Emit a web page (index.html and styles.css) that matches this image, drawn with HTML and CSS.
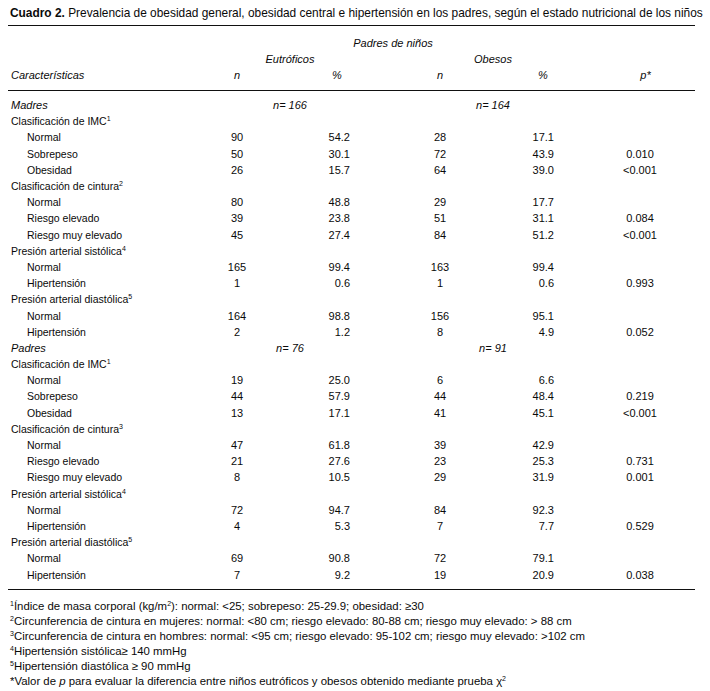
FILE: index.html
```html
<!DOCTYPE html>
<html lang="es">
<head>
<meta charset="utf-8">
<link rel="stylesheet" href="styles.css">
</head>
<body>
<div class="page">
  <p class="caption"><b>Cuadro 2.</b> Prevalencia de obesidad general, obesidad central e hipertensión en los padres, según el estado nutricional de los niños</p>
  <table class="tbl">
    <colgroup>
      <col class="c-label"><col class="c-n1"><col class="c-p1"><col class="c-n2"><col class="c-p2"><col class="c-p">
    </colgroup>
    <thead>
      <tr class="h1"><th></th><th colspan="4" class="ctr">Padres de niños</th><th></th></tr>
      <tr class="h2"><th></th><th colspan="2" class="ctr">Eutróficos</th><th colspan="2" class="ctr">Obesos</th><th></th></tr>
      <tr class="h3"><th class="lbl">Características</th><th class="ctr">n</th><th class="ctr">%</th><th class="ctr">n</th><th class="ctr">%</th><th class="ctr">p*</th></tr>
    </thead>
    <tbody>
      <tr class="first"><td class="grp">Madres</td><td colspan="2" class="ctr it">n= 166</td><td colspan="2" class="ctr it">n= 164</td><td></td></tr>
      <tr><td class="cat">Clasificación de IMC<sup>1</sup></td><td></td><td></td><td></td><td></td><td></td></tr>
      <tr><td class="sub">Normal</td><td class="n">90</td><td class="pc">54.2</td><td class="n">28</td><td class="pc2">17.1</td><td class="pv"></td></tr>
      <tr><td class="sub">Sobrepeso</td><td class="n">50</td><td class="pc">30.1</td><td class="n">72</td><td class="pc2">43.9</td><td class="pv">0.010</td></tr>
      <tr><td class="sub">Obesidad</td><td class="n">26</td><td class="pc">15.7</td><td class="n">64</td><td class="pc2">39.0</td><td class="pv">&lt;0.001</td></tr>
      <tr><td class="cat">Clasificación de cintura<sup>2</sup></td><td></td><td></td><td></td><td></td><td></td></tr>
      <tr><td class="sub">Normal</td><td class="n">80</td><td class="pc">48.8</td><td class="n">29</td><td class="pc2">17.7</td><td class="pv"></td></tr>
      <tr><td class="sub">Riesgo elevado</td><td class="n">39</td><td class="pc">23.8</td><td class="n">51</td><td class="pc2">31.1</td><td class="pv">0.084</td></tr>
      <tr><td class="sub">Riesgo muy elevado</td><td class="n">45</td><td class="pc">27.4</td><td class="n">84</td><td class="pc2">51.2</td><td class="pv">&lt;0.001</td></tr>
      <tr><td class="cat">Presión arterial sistólica<sup>4</sup></td><td></td><td></td><td></td><td></td><td></td></tr>
      <tr><td class="sub">Normal</td><td class="n">165</td><td class="pc">99.4</td><td class="n">163</td><td class="pc2">99.4</td><td class="pv"></td></tr>
      <tr><td class="sub">Hipertensión</td><td class="n">1</td><td class="pc">0.6</td><td class="n">1</td><td class="pc2">0.6</td><td class="pv">0.993</td></tr>
      <tr><td class="cat">Presión arterial diastólica<sup>5</sup></td><td></td><td></td><td></td><td></td><td></td></tr>
      <tr><td class="sub">Normal</td><td class="n">164</td><td class="pc">98.8</td><td class="n">156</td><td class="pc2">95.1</td><td class="pv"></td></tr>
      <tr><td class="sub">Hipertensión</td><td class="n">2</td><td class="pc">1.2</td><td class="n">8</td><td class="pc2">4.9</td><td class="pv">0.052</td></tr>
      <tr><td class="grp">Padres</td><td colspan="2" class="ctr it">n= 76</td><td colspan="2" class="ctr it">n= 91</td><td></td></tr>
      <tr><td class="cat">Clasificación de IMC<sup>1</sup></td><td></td><td></td><td></td><td></td><td></td></tr>
      <tr><td class="sub">Normal</td><td class="n">19</td><td class="pc">25.0</td><td class="n">6</td><td class="pc2">6.6</td><td class="pv"></td></tr>
      <tr><td class="sub">Sobrepeso</td><td class="n">44</td><td class="pc">57.9</td><td class="n">44</td><td class="pc2">48.4</td><td class="pv">0.219</td></tr>
      <tr><td class="sub">Obesidad</td><td class="n">13</td><td class="pc">17.1</td><td class="n">41</td><td class="pc2">45.1</td><td class="pv">&lt;0.001</td></tr>
      <tr><td class="cat">Clasificación de cintura<sup>3</sup></td><td></td><td></td><td></td><td></td><td></td></tr>
      <tr><td class="sub">Normal</td><td class="n">47</td><td class="pc">61.8</td><td class="n">39</td><td class="pc2">42.9</td><td class="pv"></td></tr>
      <tr><td class="sub">Riesgo elevado</td><td class="n">21</td><td class="pc">27.6</td><td class="n">23</td><td class="pc2">25.3</td><td class="pv">0.731</td></tr>
      <tr><td class="sub">Riesgo muy elevado</td><td class="n">8</td><td class="pc">10.5</td><td class="n">29</td><td class="pc2">31.9</td><td class="pv">0.001</td></tr>
      <tr><td class="cat">Presión arterial sistólica<sup>4</sup></td><td></td><td></td><td></td><td></td><td></td></tr>
      <tr><td class="sub">Normal</td><td class="n">72</td><td class="pc">94.7</td><td class="n">84</td><td class="pc2">92.3</td><td class="pv"></td></tr>
      <tr><td class="sub">Hipertensión</td><td class="n">4</td><td class="pc">5.3</td><td class="n">7</td><td class="pc2">7.7</td><td class="pv">0.529</td></tr>
      <tr><td class="cat">Presión arterial diastólica<sup>5</sup></td><td></td><td></td><td></td><td></td><td></td></tr>
      <tr><td class="sub">Normal</td><td class="n">69</td><td class="pc">90.8</td><td class="n">72</td><td class="pc2">79.1</td><td class="pv"></td></tr>
      <tr class="last"><td class="sub">Hipertensión</td><td class="n">7</td><td class="pc">9.2</td><td class="n">19</td><td class="pc2">20.9</td><td class="pv">0.038</td></tr>
    </tbody>
  </table>
  <div class="notes">
    <p><sup>1</sup>Índice de masa corporal (kg/m<sup>2</sup>): normal: &lt;25; sobrepeso: 25-29.9; obesidad: ≥30</p>
    <p><sup>2</sup>Circunferencia de cintura en mujeres: normal: &lt;80 cm; riesgo elevado: 80-88 cm; riesgo muy elevado: &gt; 88 cm</p>
    <p><sup>3</sup>Circunferencia de cintura en hombres: normal: &lt;95 cm; riesgo elevado: 95-102 cm; riesgo muy elevado: &gt;102 cm</p>
    <p><sup>4</sup>Hipertensión sistólica≥ 140 mmHg</p>
    <p><sup>5</sup>Hipertensión diastólica ≥ 90 mmHg</p>
    <p>*Valor de <i>p</i> para evaluar la diferencia entre niños eutróficos y obesos obtenido mediante prueba <span class="chi">χ<sup>2</sup></span></p>
  </div>
</div>
</body>
</html>
```
FILE: styles.css
```css
html, body {
  margin: 0;
  padding: 0;
  background: #fff;
}
body {
  font-family: "Liberation Sans", Arial, sans-serif;
  color: #0a0a0a;
}
.page {
  width: 710px;
  padding: 6px 0 0 8px;
  box-sizing: border-box;
}
.caption {
  margin: 0 0 0 2px;
  font-size: 11.9px;
  line-height: 14px;
  white-space: nowrap;
}
.caption b {
  font-weight: bold;
}
.tbl {
  margin-top: 5px;
  width: 687px;
  border-collapse: collapse;
  table-layout: fixed;
  font-size: 11px;
  border-top: 1.5px solid #111;
  border-bottom: 1.5px solid #111;
}
.c-label { width: 182px; }
.c-n1 { width: 94px; }
.c-p1 { width: 106px; }
.c-n2 { width: 100px; }
.c-p2 { width: 106px; }
.c-p { width: 99px; }
th, td {
  padding: 0;
  white-space: nowrap;
  font-weight: normal;
}
thead th {
  font-style: italic;
}
.h1 th { height: 16px; padding-top: 9px; line-height: 16px; vertical-align: middle; }
.h2 th { height: 16px; line-height: 16px; }
.h3 th { height: 16px; line-height: 16px; padding-bottom: 7px; border-bottom: 1.5px solid #111; }
.h3 .lbl { text-align: left; padding-left: 3px; }
.ctr { text-align: center; }
tbody td { height: 16.2px; line-height: 16px; }
tbody tr.first td { padding-top: 6px; }
tbody tr.last td { padding-bottom: 6px; }
.grp { font-style: italic; padding-left: 3px; }
.it { font-style: italic; }
.cat { padding-left: 3px; font-size: 10.5px; }
.sub { padding-left: 19px; font-size: 10.5px; }
.n { text-align: center; }
.pc { text-align: right; padding-right: 40px; }
.pc2 { text-align: right; padding-right: 42px; }
.pv { text-align: center; padding-right: 11px; }
sup {
  font-size: 7px;
  line-height: 0;
  vertical-align: 4px;
}
.notes {
  margin-top: 9px;
  font-size: 11.4px;
}
.notes p {
  margin: 0 0 0 2px;
  height: 15px;
  line-height: 15px;
  white-space: nowrap;
}
.chi sup { vertical-align: 4px; }
```
